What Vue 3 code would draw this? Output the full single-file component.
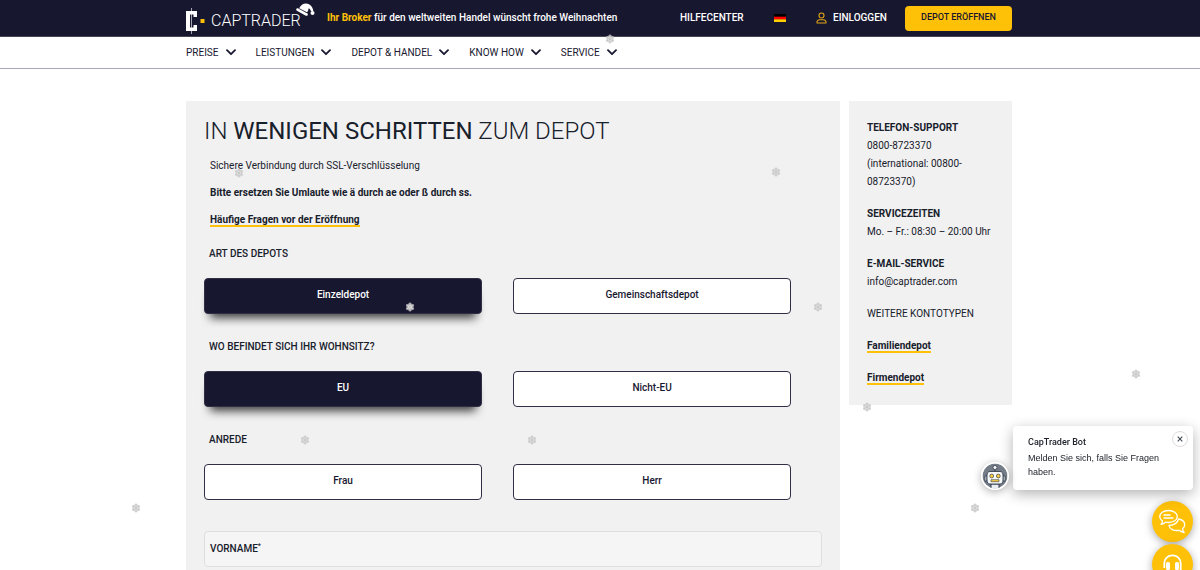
<script setup>
import { ref } from 'vue'

const menu = ['PREISE', 'LEISTUNGEN', 'DEPOT & HANDEL', 'KNOW HOW', 'SERVICE']

const groups = ref([
  { name: 'art', legend: 'ART DES DEPOTS', options: ['Einzeldepot', 'Gemeinschaftsdepot'], value: 'Einzeldepot' },
  { name: 'wohnsitz', legend: 'WO BEFINDET SICH IHR WOHNSITZ?', options: ['EU', 'Nicht-EU'], value: 'EU' },
  { name: 'anrede', legend: 'ANREDE', options: ['Frau', 'Herr'], value: '' }
])

const flakes = [
  [610, 39], [239, 173], [776, 172], [410, 307], [818, 307], [305, 440],
  [532, 440], [867, 407], [1136, 374], [136, 508], [975, 508]
]
</script>

<template>
  <div class="page">
    <header class="top">
      <div class="wrap top-row">
        <a class="logo" href="#" aria-label="CapTrader">
          <svg class="mark" width="22" height="28" viewBox="0 0 22 28">
            <path d="M5.500 1v26" stroke="#a5a5b2" stroke-width="1" />
            <path d="M0 4h11v6H7.500V7.500H4v13h3.500V18H11v6H0z" fill="#fff" />
            <path d="M14.500 12h4v4h-4z" fill="#ffc107" />
          </svg>
          <span class="logo-text">CAPTRADER</span>
          <svg class="hat" width="20" height="14" viewBox="0 0 20 14">
            <path d="M3 6.500C5 2 9.500.3 13 2.200c2.500 1.400 4 4 4.300 6.800l-2.300.3c-.5-1.600-1.200-2.500-2.300-3-.2 1.500-.7 2.900-1.700 4.200z" fill="#fff" />
            <path d="M1.500 7.500l9 5" stroke="#fff" stroke-width="2.600" stroke-linecap="round" />
            <path d="M2.700 6.300l8.600 4.600" stroke="#181730" stroke-width=".6" />
            <circle cx="16.500" cy="11" r="2" fill="#fff" />
          </svg>
        </a>
        <p class="slogan"><strong>Ihr Broker</strong> für den weltweiten Handel wünscht frohe Weihnachten</p>
        <a class="help" href="#">HILFECENTER</a>
        <a class="lang" href="#" aria-label="Deutsch">
          <svg width="12" height="8" viewBox="0 0 12 8">
            <path d="M0 0h12v3H0z" fill="#000" /><path d="M0 2.700h12v2.700H0z" fill="#f00" /><path d="M0 5.300h12V8H0z" fill="#ffce00" />
          </svg>
        </a>
        <a class="login" href="#">
          <svg width="11" height="12" viewBox="0 0 11 12" fill="none" stroke="#e0a514" stroke-width="1.100">
            <circle cx="5.500" cy="3.500" r="2.500" />
            <path d="M1 11C.6 8.800 2 7.700 3.700 7.700h3.600C9 7.700 10.400 8.800 10 11z" stroke-linejoin="round" />
          </svg>
          EINLOGGEN
        </a>
        <button class="open" type="button">DEPOT ERÖFFNEN</button>
      </div>
    </header>

    <nav class="nav">
      <div class="wrap nav-row">
        <a v-for="m in menu" :key="m" href="#">
          {{ m }}
          <svg width="10" height="7" viewBox="0 0 10 7"><path d="M1 1.200l4 4 4-4" fill="none" stroke="#181730" stroke-width="1.800" stroke-linecap="round" stroke-linejoin="round" /></svg>
        </a>
      </div>
    </nav>

    <main class="wrap body">
      <form class="panel" @submit.prevent>
        <h1>IN <b>WENIGEN SCHRITTEN</b> ZUM DEPOT</h1>
        <div class="intro">
          <p>Sichere Verbindung durch SSL-Verschlüsselung</p>
          <p><b>Bitte ersetzen Sie Umlaute wie ä durch ae oder ß durch ss.</b></p>
          <p><a class="line" href="#">Häufige Fragen vor der Eröffnung</a></p>
        </div>
        <fieldset v-for="g in groups" :key="g.name">
          <legend>{{ g.legend }}</legend>
          <div class="options">
            <label v-for="o in g.options" :key="o" class="option">
              <input v-model="g.value" type="radio" :name="g.name" :value="o" />
              <span>{{ o }}</span>
            </label>
          </div>
        </fieldset>
        <div class="field">
          <label for="vorname">VORNAME<sup>*</sup></label>
          <input id="vorname" type="text" />
        </div>
      </form>

      <aside class="side">
        <p><b>TELEFON-SUPPORT</b><br />0800-8723370<br />(international: 00800-<wbr />08723370)</p>
        <p><b>SERVICEZEITEN</b><br />Mo. – Fr.: 08:30 – 20:00 Uhr</p>
        <p><b>E-MAIL-SERVICE</b><br />info@captrader.com</p>
        <p>WEITERE KONTOTYPEN</p>
        <p><a class="line" href="#">Familiendepot</a></p>
        <p><a class="line" href="#">Firmendepot</a></p>
      </aside>
    </main>

    <div class="snow" aria-hidden="true">
      <svg v-for="(f, i) in flakes" :key="i" width="10" height="10" viewBox="-5 -5 10 10" :style="{ left: f[0] + 'px', top: f[1] + 'px' }">
        <circle r="3.700" fill="#ccc" fill-opacity=".8" />
        <path d="M0-4.500V4.500M-3.900-2.250L3.900 2.250M-3.900 2.250L3.900-2.250" stroke="#c8c8c8" stroke-width="1.200" />
        <circle r="1.800" fill="none" stroke="#e6e6e6" stroke-width=".6" />
      </svg>
    </div>

    <div class="widget">
      <section class="bubble">
        <h2>CapTrader Bot</h2>
        <p>Melden Sie sich, falls Sie Fragen haben.</p>
        <button class="close" type="button" aria-label="Schließen">
          <svg width="6" height="6" viewBox="0 0 6 6"><path d="M.7.7l4.600 4.600M5.300.7L.7 5.300" stroke="#444b55" stroke-width="1.100" /></svg>
        </button>
        <svg class="bot" width="28" height="28" viewBox="0 0 28 28">
          <defs><clipPath id="face"><circle cx="14" cy="14" r="12.500" /></clipPath></defs>
          <circle cx="14" cy="14" r="14" fill="#fff" />
          <g clip-path="url(#face)">
            <circle cx="14" cy="14" r="12.500" fill="#747c88" />
            <path d="M10 22h8v6h-8z" fill="#e9eef2" stroke="#333d4b" />
            <path d="M14 7v3" stroke="#333d4b" />
            <circle cx="14" cy="5.500" r="2" fill="#fff" stroke="#333d4b" stroke-width=".8" />
            <path d="M4 14h2v5H4zM22 14h2v5h-2z" fill="#e9eef2" stroke="#333d4b" stroke-width=".8" />
            <path d="M9 9.500h10c2 0 3 1.500 3 4v4.500c0 2.500-1 4-3 4H9c-2 0-3-1.500-3-4v-4.500c0-2.500 1-4 3-4z" fill="#f6f8fa" stroke="#333d4b" stroke-width=".9" />
            <circle cx="10.700" cy="14" r="1.900" fill="#ffd23e" stroke="#333d4b" stroke-width=".7" />
            <circle cx="17.300" cy="14" r="1.900" fill="#ffd23e" stroke="#333d4b" stroke-width=".7" />
            <path d="M10 17.700h8v2h-8z" fill="#ffd23e" stroke="#333d4b" stroke-width=".6" />
          </g>
        </svg>
      </section>
      <button class="round" type="button" aria-label="Chat">
        <svg width="41" height="41" viewBox="0 0 41 41" fill="none" stroke="#fff" stroke-width="1.300" stroke-linejoin="round" stroke-linecap="round">
          <path d="M16.500 9.500c5 0 8.800 2.500 8.800 6s-3.800 6-8.800 6c-1 0-2-.1-2.900-.4-1.300 1.400-2.700 2-4.600 2.300 1-1 1.400-2.100 1.400-3.500-1.700-1.100-2.700-2.700-2.700-4.400 0-3.500 3.800-6 8.800-6z" />
          <path d="M12 14h6M12 17h9" />
          <path d="M26.500 18c3.700.6 6.200 2.800 6.200 5.700 0 1.600-.8 3-2.100 4 0 1.500.5 2.700 1.500 3.800-2-.3-3.500-.9-4.900-2.200-5.300.9-9.700-1.300-10.200-4.800 4.700-.3 8.600-2.400 9.500-6.500z" />
        </svg>
      </button>
      <button class="round" type="button" aria-label="Hotline">
        <svg width="41" height="41" viewBox="0 0 41 41">
          <path d="M12.300 24v-4.500c0-5 3.500-8.200 8.200-8.200s8.200 3.200 8.200 8.200V26" fill="none" stroke="#fff" stroke-width="1.800" />
          <rect x="14" y="18" width="4" height="8" rx="1.600" fill="#fff" /><rect x="23" y="18" width="4" height="8" rx="1.600" fill="#fff" />
        </svg>
      </button>
    </div>
  </div>
</template>

<style>
body { margin: 0; background: #fff; }
</style>

<style scoped>
* { box-sizing: border-box; }
.page {
  position: relative;
  min-height: 100vh;
  display: flex;
  flex-direction: column;
  padding-right: 2px;
  font: 10px/18px Roboto, "Liberation Sans", sans-serif;
  color: #17202b;
}
p, h1, h2 { margin: 0; }
a { color: inherit; text-decoration: none; }
button { font: inherit; border: 0; padding: 0; cursor: pointer; }
.wrap { width: 100%; max-width: 826px; margin: 0 auto; }

.top { background: #181730; border-bottom: 1px solid #474659; margin-right: -2px; padding-right: 2px; color: #fff; font-weight: 500; }
.top-row { display: flex; align-items: center; height: 36px; }
.logo { display: flex; align-items: center; position: relative; width: 141px; padding-top: 6px; }
.logo-text { margin-left: 3px; font-size: 16px; font-weight: 300; }
.hat { position: absolute; left: 110px; top: 1px; }
.slogan { width: 353px; white-space: nowrap; }
.slogan strong { color: #ffc107; }
.help { width: 94px; }
.lang { width: 42px; display: flex; }
.login { display: flex; align-items: center; gap: 6px; }
.open { margin-left: auto; width: 107px; height: 25px; border-radius: 4px; background: #ffc107; color: #181730; font-size: 9px; line-height: 22px; padding-bottom: 3px; }

.nav { border-bottom: 1px solid #a9a8b8; margin-right: -2px; padding-right: 2px; color: #181730; }
.nav-row { display: flex; gap: 20px; height: 31px; align-items: center; }
.nav-row a { display: flex; align-items: center; gap: 7px; }

.body { flex: 1; display: grid; grid-template-columns: 1fr 163px; gap: 9px; padding-top: 32px; }
.panel { background: #f1f1f1; padding: 14px 18px 3px; }
h1 { font-size: 24px; line-height: 32px; font-weight: 300; }
.intro { margin: 10px 6px 16px; display: grid; gap: 9px; }
.line { font-weight: 700; border-bottom: 1px solid #ffc107; }
.intro .line { border-bottom-width: 2px; }
fieldset { border: 0; margin: 0 0 24px; padding: 0; min-width: 0; }
legend { padding: 0 0 0 5px; font-weight: 500; }
.options { display: grid; grid-template-columns: 1fr 1fr; margin-top: 15px; }
.option { position: relative; width: 90%; }
.option input { position: absolute; opacity: 0; }
.option span {
  display: block;
  height: 36px;
  line-height: 32px;
  text-align: center;
  border: 1px solid #2f2e45;
  border-radius: 4px;
  background: #fff;
  color: #181730;
  font-weight: 500;
}
.option input:checked + span { background: #181730; color: #fff; box-shadow: 0 10px 10px -6px rgba(0, 0, 0, .75); }
.field { display: flex; align-items: center; height: 36px; margin-top: 31px; border: 1px solid #dedede; border-radius: 4px; background: #f5f5f5; padding: 0 5px; }
.field label { font-weight: 500; }
.field sup { font-size: 7px; line-height: 1px; }
.field input { flex: 1; border: 0; background: transparent; outline: 0; font: inherit; }

.side { align-self: start; background: #f1f1f1; padding: 18px 17px 18px 18px; display: grid; gap: 14px; }
.side .line { border-bottom-width: 2px; }

.snow { position: absolute; inset: 0; pointer-events: none; }
.snow svg { position: absolute; margin: -5px; }

.widget { position: fixed; right: 7px; bottom: -15px; display: flex; flex-direction: column; align-items: flex-end; gap: 2px; }
.bubble {
  position: relative;
  width: 180px;
  padding: 9px 15px 11px;
  margin-bottom: 9px;
  border-radius: 4px;
  background: #fff;
  box-shadow: 0 4px 14px rgba(0, 0, 0, .3);
  font: 9px/14px "Liberation Sans", Arial, sans-serif;
  color: #20242c;
}
.bubble h2 { font: 500 9px/14px Roboto, sans-serif; margin-bottom: 2px; }
.close { position: absolute; right: 5px; top: 5px; width: 16px; height: 16px; border: 1px solid #ddd; border-radius: 50%; background: #fff; display: grid; place-items: center; }
.bot { position: absolute; left: -32px; bottom: 0; border-radius: 50%; box-shadow: 0 2px 8px rgba(0, 0, 0, .3); }
.round { width: 41px; height: 41px; border-radius: 50%; background: #ffc107; box-shadow: 0 2px 8px rgba(0, 0, 0, .35); display: block; }
</style>
